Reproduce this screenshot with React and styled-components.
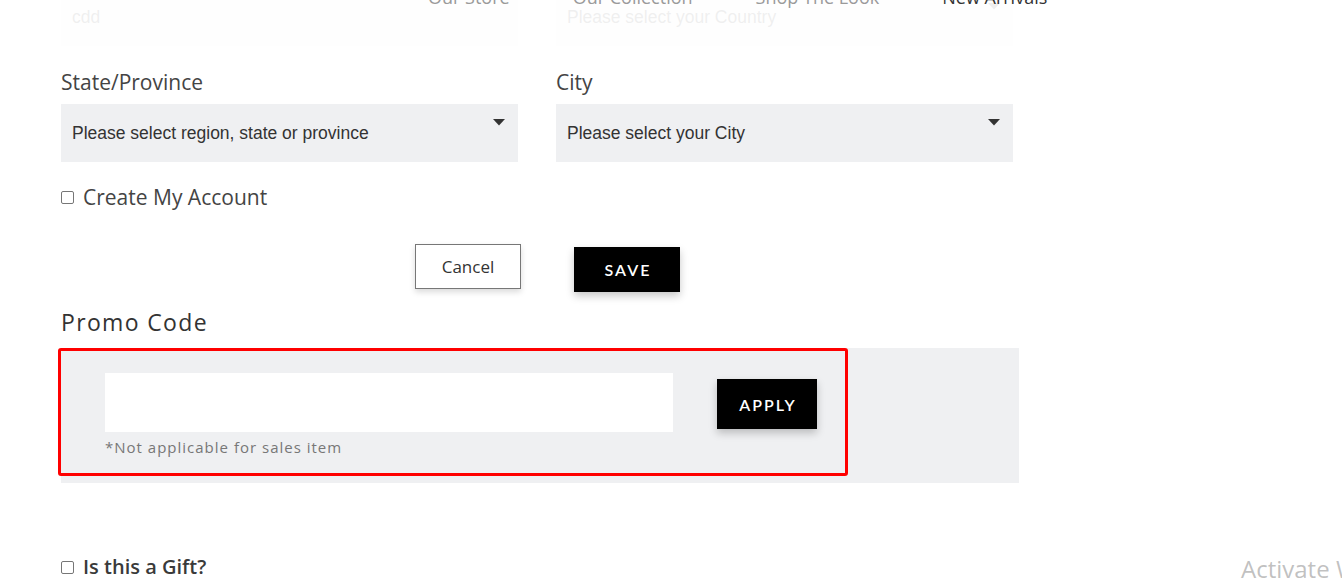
import React from "react";
import styled, { createGlobalStyle } from "styled-components";

const GlobalStyle = createGlobalStyle`
  html, body { margin: 0; padding: 0; background: #fff; }
  body { overflow: hidden; font-family: "Open Sans", "Liberation Sans", sans-serif; }
  * { box-sizing: border-box; }
`;

const Page = styled.div`
  position: relative;
  width: 1342px;
  height: 584px;
  overflow: hidden;
  padding-left: 61px;
`;

const Header = styled.header`
  position: absolute;
  top: 0;
  left: 0;
  right: 0;
  height: 47px;
  background: rgba(255, 255, 255, 0.92);
  z-index: 5;
`;

const Nav = styled.nav`
  display: flex;
  gap: 63px;
  margin-top: -14px;
  padding-left: 428px;
  font-family: "Open Sans", sans-serif;
  font-size: 18px;
  line-height: 22px;
`;

const NavItem = styled.span`
  color: ${(p) => (p.$active ? "#333" : "#9a9a9a")};
`;

const Form = styled.div`
  margin-top: -12px;
  display: flex;
  flex-direction: column;
`;

const Row = styled.div`
  display: grid;
  grid-template-columns: 457px 457px;
  column-gap: 38px;
  margin-top: ${(p) => p.$mt || 0}px;
`;

const Field = styled.div`
  display: flex;
  flex-direction: column;
`;

const Label = styled.label`
  font-family: "Open Sans", sans-serif;
  font-size: 21px;
  line-height: 24px;
  color: #444;
  margin-bottom: 10px;
`;

const Control = styled.div`
  position: relative;
  height: 58px;
  background: #eff0f2;
  display: flex;
  align-items: center;
  padding-left: 11px;
  font-family: "Liberation Sans", Arial, sans-serif;
  font-size: 17.5px;
  color: #333;
`;

const Arrow = styled.svg`
  position: absolute;
  right: 13px;
  top: 15px;
`;

const CheckRow = styled.label`
  display: flex;
  align-items: center;
  gap: 9px;
  margin-top: ${(p) => p.$mt}px;
  font-family: "Open Sans", sans-serif;
  font-size: ${(p) => (p.$dark ? 20 : 21)}px;
  line-height: 24px;
  color: ${(p) => (p.$dark ? "#3a3a3a" : "#444")};
  font-weight: ${(p) => (p.$dark ? 600 : 400)};
`;

const Box = styled.span`
  width: 13px;
  height: 13px;
  border: 1px solid #767676;
  border-radius: 2px;
  background: #fff;
  flex: none;
`;

const Buttons = styled.div`
  display: flex;
  align-items: flex-start;
  gap: 53px;
  margin-top: 35px;
  padding-left: 354px;
`;

const OutlineButton = styled.button`
  width: 106px;
  height: 45px;
  border: 1px solid #777;
  background: #fff;
  box-shadow: 0 3px 6px rgba(0, 0, 0, 0.15);
  font-family: "Open Sans", sans-serif;
  font-size: 17px;
  color: #333;
  padding: 0;
`;

const DarkButton = styled.button`
  width: ${(p) => p.$w}px;
  height: ${(p) => p.$h}px;
  margin-top: ${(p) => p.$mt || 0}px;
  border: none;
  background: #000;
  color: #fff;
  box-shadow: 0 4px 8px rgba(0, 0, 0, 0.22);
  font-family: "Lato", sans-serif;
  font-weight: 600;
  font-size: 16px;
  letter-spacing: 2px;
  padding: 0 0 0 2px;
  flex: none;
`;

const PromoTitle = styled.h3`
  margin: 16px 0 0;
  font-family: "Open Sans", sans-serif;
  font-weight: 400;
  font-size: 23px;
  line-height: 28px;
  letter-spacing: 1.35px;
  color: #333;
`;

const PromoPanel = styled.div`
  position: relative;
  margin-top: 12px;
  width: 958px;
  height: 135px;
  background: #eff0f2;
  padding: 25px 0 0 44px;
  display: flex;
  gap: 44px;
  align-items: flex-start;
`;

const Highlight = styled.div`
  position: absolute;
  left: -3px;
  top: 0;
  width: 790px;
  height: 128px;
  border: 3px solid #ff0000;
  border-radius: 3px;
  pointer-events: none;
`;

const PromoCol = styled.div`
  display: flex;
  flex-direction: column;
`;

const PromoInput = styled.div`
  width: 568px;
  height: 59px;
  background: #fff;
`;

const Note = styled.div`
  margin-top: 6px;
  font-family: "Open Sans", sans-serif;
  font-size: 15px;
  line-height: 18px;
  letter-spacing: 1px;
  color: #777;
`;

const Watermark = styled.div`
  position: absolute;
  left: 1241px;
  top: 552px;
  font-family: "Open Sans", sans-serif;
  font-size: 24px;
  color: rgba(140, 140, 140, 0.55);
  white-space: nowrap;
`;

const DropArrow = () => (
  <Arrow width="12" height="7" viewBox="0 0 12 7">
    <path d="M0 0 L12 0 L6 6.5 Z" fill="#333" />
  </Arrow>
);

export default function App() {
  return (
    <>
      <GlobalStyle />
      <Page>
        <Header>
          <Nav>
            <NavItem>Our Store</NavItem>
            <NavItem>Our Collection</NavItem>
            <NavItem>Shop The Look</NavItem>
            <NavItem $active>New Arrivals</NavItem>
          </Nav>
        </Header>
        <Form>
          <Row>
            <Control>cdd</Control>
            <Control>
              Please select your Country
              <DropArrow />
            </Control>
          </Row>
          <Row $mt={24}>
            <Field>
              <Label>State/Province</Label>
              <Control>
                Please select region, state or province
                <DropArrow />
              </Control>
            </Field>
            <Field>
              <Label>City</Label>
              <Control>
                Please select your City
                <DropArrow />
              </Control>
            </Field>
          </Row>
          <CheckRow $mt={23}>
            <Box />
            Create My Account
          </CheckRow>
          <Buttons>
            <OutlineButton>Cancel</OutlineButton>
            <DarkButton $w={106} $h={45} $mt={3}>SAVE</DarkButton>
          </Buttons>
          <PromoTitle>Promo Code</PromoTitle>
          <PromoPanel>
            <PromoCol>
              <PromoInput />
              <Note>*Not applicable for sales item</Note>
            </PromoCol>
            <DarkButton $w={100} $h={50} $mt={6}>APPLY</DarkButton>
            <Highlight />
          </PromoPanel>
          <CheckRow $mt={72} $dark>
            <Box />
            Is this a Gift?
          </CheckRow>
        </Form>
        <Watermark>Activate Windows</Watermark>
      </Page>
    </>
  );
}
